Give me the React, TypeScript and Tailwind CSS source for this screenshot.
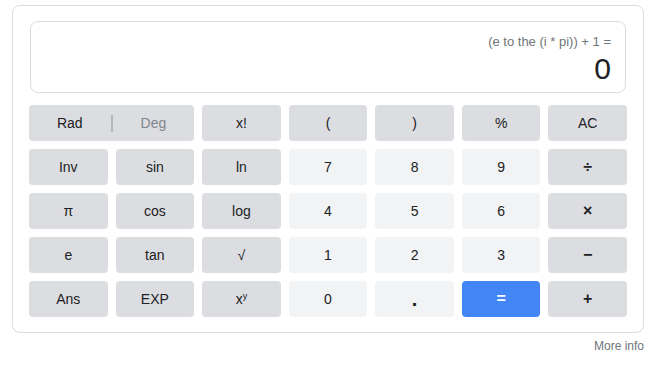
import type { ReactNode } from 'react'

type Key = {
  label: ReactNode
  tone: 'op' | 'num' | 'eq'
  bold?: boolean
}

const toneClass = {
  op: 'bg-[#dcdde1] text-[#202124]',
  num: 'bg-[#f1f3f4] text-[#202124]',
  eq: 'bg-[#4285f4] text-white',
}

const rows: Key[][] = [
  [
    { label: 'x!', tone: 'op' },
    { label: '(', tone: 'op' },
    { label: ')', tone: 'op' },
    { label: '%', tone: 'op' },
    { label: 'AC', tone: 'op' },
  ],
  [
    { label: 'Inv', tone: 'op' },
    { label: 'sin', tone: 'op' },
    { label: 'ln', tone: 'op' },
    { label: '7', tone: 'num' },
    { label: '8', tone: 'num' },
    { label: '9', tone: 'num' },
    { label: '÷', tone: 'op', bold: true },
  ],
  [
    { label: 'π', tone: 'op' },
    { label: 'cos', tone: 'op' },
    { label: 'log', tone: 'op' },
    { label: '4', tone: 'num' },
    { label: '5', tone: 'num' },
    { label: '6', tone: 'num' },
    { label: '×', tone: 'op', bold: true },
  ],
  [
    { label: 'e', tone: 'op' },
    { label: 'tan', tone: 'op' },
    { label: '√', tone: 'op' },
    { label: '1', tone: 'num' },
    { label: '2', tone: 'num' },
    { label: '3', tone: 'num' },
    { label: '−', tone: 'op', bold: true },
  ],
  [
    { label: 'Ans', tone: 'op' },
    { label: 'EXP', tone: 'op' },
    {
      label: (
        <span>
          x<sup className="text-[9px] top-[-0.5em]">y</sup>
        </span>
      ),
      tone: 'op',
    },
    { label: '0', tone: 'num' },
    { label: <span className="text-[20px] leading-none font-bold">.</span>, tone: 'num' },
    { label: '=', tone: 'eq', bold: true },
    { label: '+', tone: 'op', bold: true },
  ],
]

function CalcKey({ k }: { k: Key }) {
  return (
    <button
      className={`h-9 rounded-[4px] text-[14px] flex items-center justify-center ${toneClass[k.tone]} ${k.bold ? 'font-bold text-[16px]' : ''}`}
    >
      {k.label}
    </button>
  )
}

export default function App() {
  return (
    <div className="bg-white w-[654px] h-[374px] font-['Liberation_Sans',Arial,sans-serif]">
      <div className="ml-[12px] pt-[5px] w-[632px]">
        <div className="rounded-lg border border-[#dadce0] px-4 pt-[15px] pb-[15px]">
          <div className="mx-px h-[72px] rounded-lg border border-[#dadce0] px-[14px] pt-[11px] text-right">
            <div className="text-[13px] leading-[18px] text-[#70757a]">(e to the (i * pi)) + 1 =</div>
            <div className="text-[30px] leading-[36px] text-[#202124] font-light">0</div>
          </div>

          <div className="mt-[12px] grid grid-cols-7 gap-x-2 gap-y-2">
            <button className="col-span-2 h-9 rounded-[4px] bg-[#dcdde1] text-[14px] flex items-center">
              <span className="flex-1 text-center text-[#202124]">Rad</span>
              <span className="h-[17px] w-[2px] bg-[#b4b6ba]" />
              <span className="flex-1 text-center text-[#80868b]">Deg</span>
            </button>
            {rows.flat().map((k, i) => (
              <CalcKey key={i} k={k} />
            ))}
          </div>
        </div>
        <div className="mt-[4px] text-right text-[12px] text-[#70757a]">More info</div>
      </div>
    </div>
  )
}
